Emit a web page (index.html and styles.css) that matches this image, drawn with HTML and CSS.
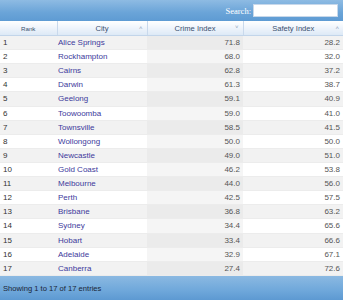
FILE: index.html
```html
<!DOCTYPE html>
<html>
<head>
<meta charset="utf-8">
<link rel="stylesheet" href="styles.css">
</head>
<body>
<div class="wrap">
  <div class="topbar">
    <label class="search">Search: <input class="search-input" type="text"></label>
  </div>
  <table class="grid">
    <colgroup><col class="c1"><col class="c2"><col class="c3"><col class="c4"></colgroup>
    <thead>
      <tr>
        <th class="h-rank">Rank</th>
        <th>City<span class="arrow up">&#x2C4;</span></th>
        <th>Crime Index<span class="arrow">&#x2C5;</span></th>
        <th>Safety Index<span class="arrow up">&#x2C4;</span></th>
      </tr>
    </thead>
    <tbody>
      <tr><td>1</td><td class="city">Alice Springs</td><td class="num s">71.8</td><td class="num">28.2</td></tr>
      <tr><td>2</td><td class="city">Rockhampton</td><td class="num s">68.0</td><td class="num">32.0</td></tr>
      <tr><td>3</td><td class="city">Cairns</td><td class="num s">62.8</td><td class="num">37.2</td></tr>
      <tr><td>4</td><td class="city">Darwin</td><td class="num s">61.3</td><td class="num">38.7</td></tr>
      <tr><td>5</td><td class="city">Geelong</td><td class="num s">59.1</td><td class="num">40.9</td></tr>
      <tr><td>6</td><td class="city">Toowoomba</td><td class="num s">59.0</td><td class="num">41.0</td></tr>
      <tr><td>7</td><td class="city">Townsville</td><td class="num s">58.5</td><td class="num">41.5</td></tr>
      <tr><td>8</td><td class="city">Wollongong</td><td class="num s">50.0</td><td class="num">50.0</td></tr>
      <tr><td>9</td><td class="city">Newcastle</td><td class="num s">49.0</td><td class="num">51.0</td></tr>
      <tr><td>10</td><td class="city">Gold Coast</td><td class="num s">46.2</td><td class="num">53.8</td></tr>
      <tr><td>11</td><td class="city">Melbourne</td><td class="num s">44.0</td><td class="num">56.0</td></tr>
      <tr><td>12</td><td class="city">Perth</td><td class="num s">42.5</td><td class="num">57.5</td></tr>
      <tr><td>13</td><td class="city">Brisbane</td><td class="num s">36.8</td><td class="num">63.2</td></tr>
      <tr><td>14</td><td class="city">Sydney</td><td class="num s">34.4</td><td class="num">65.6</td></tr>
      <tr><td>15</td><td class="city">Hobart</td><td class="num s">33.4</td><td class="num">66.6</td></tr>
      <tr><td>16</td><td class="city">Adelaide</td><td class="num s">32.9</td><td class="num">67.1</td></tr>
      <tr><td>17</td><td class="city">Canberra</td><td class="num s">27.4</td><td class="num">72.6</td></tr>
    </tbody>
  </table>
  <div class="footer">Showing 1 to 17 of 17 entries</div>
</div>
</body>
</html>
```
FILE: styles.css
```css
html, body { margin: 0; padding: 0; background: #fff; }
.wrap { width: 343px; height: 300px; overflow: hidden; font-family: "Liberation Sans", Arial, sans-serif; }
.topbar {
  height: 21px;
  display: flex; justify-content: flex-end; align-items: center;
  padding-right: 5px;
  background: linear-gradient(to bottom, #8ebbe3 0%, #6aa4d8 60%, #5e9bd3 100%);
  box-sizing: border-box;
}
.search { color: #fff; font-family: "Liberation Serif", "Times New Roman", serif; font-size: 8.5px; display: flex; align-items: center; gap: 2px; }
.search-input { width: 85px; height: 13px; box-sizing: border-box; border: 1px solid #c8d8ea; background: #fff; padding: 0; margin: 0; }
.grid { width: 343px; border-collapse: collapse; table-layout: fixed; }
.c1 { width: 57px; } .c2 { width: 90px; } .c3 { width: 96px; } .c4 { width: 100px; }
.grid th {
  height: 14px; padding: 0; font-weight: normal;
  font-size: 7.6px; color: #3a5170;
  background: linear-gradient(to bottom, #ffffff 0%, #eef4fb 50%, #dde9f6 100%);
  border-right: 1px solid #c9d9ec; border-bottom: 1px solid #c2d5ea;
  position: relative; text-align: center;
}
.grid th:last-child { border-right: none; }
.grid th.h-rank { font-size: 6.2px; }
.arrow { position: absolute; right: 4px; top: 3px; font-size: 6px; color: #8aa0b8; }
.arrow.up { top: 4px; }
.grid td {
  height: 14.12px; padding: 0 3px; box-sizing: border-box;
  font-size: 8px; color: #333; border-bottom: 1px solid #ececec;
  white-space: nowrap; line-height: 13px;
}
.grid td.city { padding-left: 1px; color: #3d3a9c; }
.grid tbody tr:nth-child(odd) td { background: #f2f2f2; }
.grid tbody tr:nth-child(odd) td.s { background: #ebebeb; }
.grid tbody tr:nth-child(even) td.s { background: #f5f5f5; }
.grid td.num { text-align: right; color: #555; }
.footer {
  height: 25px; box-sizing: border-box; padding-left: 3px;
  display: flex; align-items: center;
  font-size: 7.6px; color: #1a2535;
  background: linear-gradient(to bottom, #8bb9e2 0%, #6ea7da 60%, #5b98d1 100%);
}
```
